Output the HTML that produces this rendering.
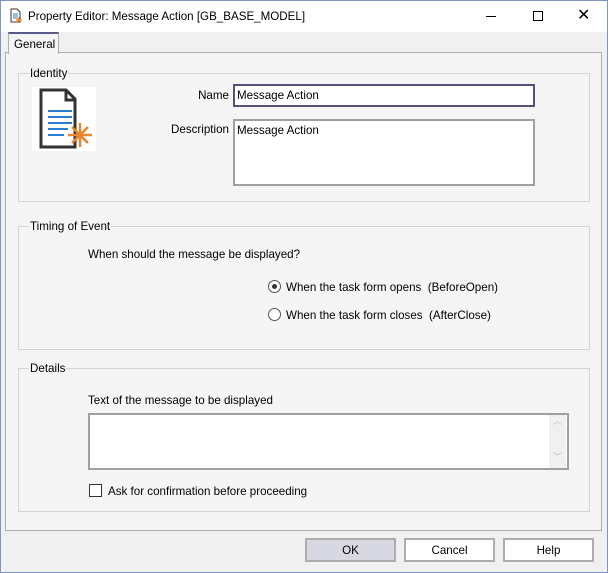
<!DOCTYPE html>
<html><head><style>
*{box-sizing:border-box;margin:0;padding:0}
body{width:608px;height:573px;background:#f0f0f0;font-family:"Liberation Sans",sans-serif;font-size:11.6px;color:#000;position:relative;overflow:hidden}
.a{position:absolute}
.title{left:0;top:0;width:608px;height:32px;background:#fff}
.grp{border:1px solid #d5d5d5}
.lg{background:#f5f5f5;padding:0 1px;color:#000}
.inp{background:#fff;border:2px solid #a0a0a0;padding:3px 2px;font-size:11.6px}
.btn{background:#fff;border:2px solid #adadad;text-align:center;line-height:21px;font-size:11.6px}
.rad{width:13px;height:13px;border-radius:50%;border:1px solid #555;background:#fff}
</style></head><body>
<div class="a title"></div>
<svg class="a" style="left:8px;top:8px" width="16" height="16"><path d="M3 1h6l3 3v10H3z" fill="#fff" stroke="#333"/><path d="M5 6h5M5 8h5M5 10h4" stroke="#2b7bd0"/><path d="M11 9v6M8 12h6M9 10l4 4M13 10l-4 4" stroke="#e67e22"/></svg>
<div class="a" style="left:28px;top:10px">Property Editor: Message Action [GB_BASE_MODEL]</div>
<div class="a" style="left:486px;top:16px;width:10px;height:1px;background:#000"></div>
<div class="a" style="left:533px;top:11px;width:10px;height:10px;border:1px solid #000"></div>
<div class="a" style="left:577px;top:5px;font-size:16px">✕</div>
<div class="a" style="left:5px;top:52px;width:597px;height:479px;background:#f5f5f5;border:1px solid #adadad"></div>
<div class="a" style="left:8px;top:32px;width:51px;height:22px;background:#f5f5f5;border:1px solid #adadad;border-top:2px solid #5a5a8a;border-bottom:none;padding:4px 0 0 5px">General</div>

<div class="a grp" style="left:18px;top:73px;width:572px;height:129px"></div>
<div class="a lg" style="left:29px;top:67px">Identity</div>
<div class="a" style="left:32px;top:87px;width:64px;height:64px;background:#fff"></div>
<svg class="a" style="left:32px;top:87px" width="64" height="64"><path d="M9 3h25l9 9v48H9z" fill="#fff" stroke="#333" stroke-width="3"/><path d="M34 3v10h9" fill="none" stroke="#333" stroke-width="3"/><path d="M16 24h24M16 30h24M16 36h24M16 42h20M16 48h16" stroke="#2b7bd0" stroke-width="2"/><path d="M48 36v24M36 48h24M40 40l16 16M56 40l-16 16" stroke="#e8862c" stroke-width="2.5"/></svg>
<div class="a" style="left:120px;width:109px;text-align:right;top:89px">Name</div>
<div class="a inp" style="left:233px;top:84px;width:302px;height:23px;border-color:#5a4d7a">Message Action</div>
<div class="a" style="left:120px;width:109px;text-align:right;top:123px">Description</div>
<div class="a inp" style="left:233px;top:119px;width:302px;height:67px">Message Action</div>

<div class="a grp" style="left:18px;top:226px;width:572px;height:124px"></div>
<div class="a lg" style="left:29px;top:220px">Timing of Event</div>
<div class="a" style="left:88px;top:248px">When should the message be displayed?</div>
<div class="a rad" style="left:268px;top:280px"><div class="a" style="left:3px;top:3px;width:5px;height:5px;border-radius:50%;background:#333"></div></div>
<div class="a" style="left:286px;top:281px">When the task form opens&nbsp; (BeforeOpen)</div>
<div class="a rad" style="left:268px;top:308px"></div>
<div class="a" style="left:286px;top:309px">When the task form closes&nbsp; (AfterClose)</div>

<div class="a grp" style="left:18px;top:368px;width:572px;height:144px"></div>
<div class="a lg" style="left:29px;top:362px">Details</div>
<div class="a" style="left:88px;top:394px">Text of the message to be displayed</div>
<div class="a inp" style="left:88px;top:413px;width:481px;height:57px"></div>
<div class="a" style="left:549px;top:415px;width:17px;height:53px;background:#f0f0f0;color:#bbb;font-size:9px;text-align:center;line-height:12px">︿<br><br><br>﹀</div>
<div class="a" style="left:89px;top:484px;width:13px;height:13px;border:1px solid #333;background:#fff"></div>
<div class="a" style="left:108px;top:485px">Ask for confirmation before proceeding</div>

<div class="a btn" style="left:305px;top:538px;width:91px;height:24px;background:#d8d8e2">OK</div>
<div class="a btn" style="left:404px;top:538px;width:91px;height:24px">Cancel</div>
<div class="a btn" style="left:503px;top:538px;width:91px;height:24px">Help</div>
<div class="a" style="left:0;top:0;width:608px;height:573px;border:1px solid #7d95c0"></div>
</body></html>
